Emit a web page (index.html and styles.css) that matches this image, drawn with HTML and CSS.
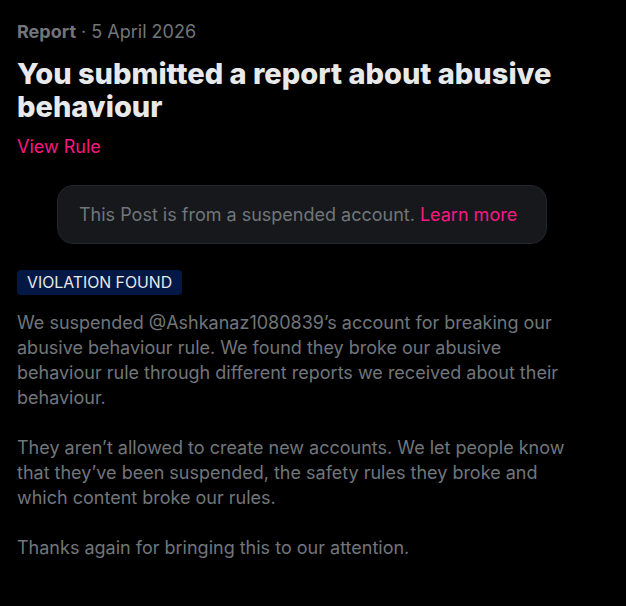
FILE: index.html
```html
<!DOCTYPE html>
<html>
<head>
<meta charset="utf-8">
<link rel="stylesheet" href="styles.css">
</head>
<body>
<main class="page">
  <div class="meta"><span class="meta-kind">Report</span> · 5 April 2026</div>
  <h1 class="title">You submitted a report about abusive behaviour</h1>
  <a class="rule-link">View Rule</a>
  <div class="notice">This Post is from a suspended account. <a class="notice-link">Learn more</a></div>
  <div class="badge">VIOLATION FOUND</div>
  <p class="body-text">We suspended @Ashkanaz1080839’s account for breaking our abusive behaviour rule. We found they broke our abusive behaviour rule through different reports we received about their behaviour.</p>
  <p class="body-text">They aren’t allowed to create new accounts. We let people know that they’ve been suspended, the safety rules they broke and which content broke our rules.</p>
  <p class="body-text">Thanks again for bringing this to our attention.</p>
</main>
</body>
</html>
```

FILE: styles.css
```css
html, body {
  margin: 0;
  background: #000;
}
body {
  font-family: "Inter", "Liberation Sans", sans-serif;
  color: #71767b;
}
.page {
  width: 570px;
  padding: 20px 0 0 17px;
  display: flex;
  flex-direction: column;
  align-items: flex-start;
}
.meta {
  font-size: 18px;
  line-height: 24px;
  color: #71767b;
}
.meta-kind {
  font-weight: 700;
}
.title {
  margin: 12.5px 0 0;
  font-size: 29px;
  line-height: 33px;
  font-weight: 800;
  color: #e7e9ea;
  letter-spacing: 0;
}
.rule-link {
  margin-top: 12.5px;
  font-size: 18px;
  line-height: 24px;
  color: #f91880;
}
.notice {
  align-self: stretch;
  margin: 26px 40px 0;
  padding: 0 21px;
  height: 59px;
  box-sizing: border-box;
  display: flex;
  align-items: center;
  gap: 5px;
  background: #16181c;
  border: 1px solid #23262a;
  border-radius: 16px;
  font-size: 18px;
  color: #71767b;
}
.notice-link {
  color: #f91880;
}
.badge {
  margin-top: 26px;
  padding: 0 10px;
  height: 25px;
  line-height: 25px;
  background: #031845;
  border-radius: 4px;
  font-size: 15.8px;
  color: #e7e9ea;
}
.body-text {
  margin: 14.5px 0 0;
  font-size: 18px;
  line-height: 25px;
  color: #71767b;
}
.body-text + .body-text {
  margin-top: 25px;
}
```
